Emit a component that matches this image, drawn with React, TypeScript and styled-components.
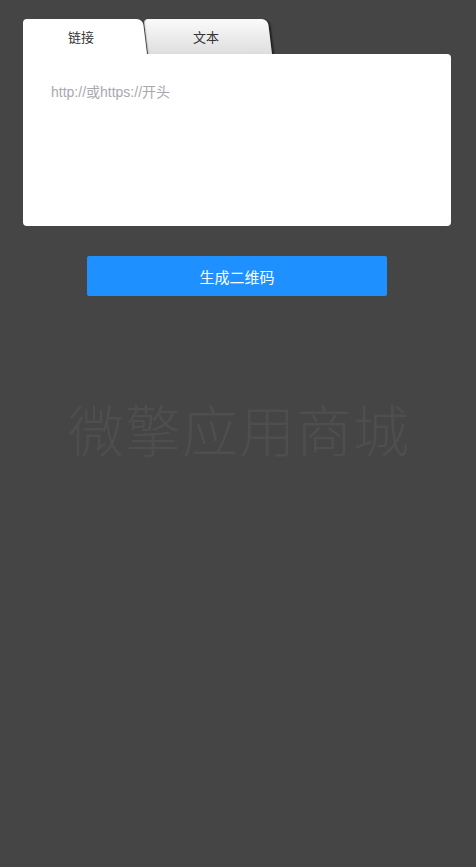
import { useState } from "react";
import styled, { createGlobalStyle } from "styled-components";

const GlobalStyle = createGlobalStyle`
  html, body {
    margin: 0;
    padding: 0;
    background: #454545;
    font-family: "Liberation Sans", Arial, "Noto Sans CJK SC", sans-serif;
  }
`;

const Page = styled.div`
  min-height: 867px;
  padding: 19px 25px 0 23px;
  box-sizing: border-box;
  display: flex;
  flex-direction: column;
`;

const TabBar = styled.div`
  display: flex;
  flex-direction: row;
  height: 35px;
`;

const Tab = styled.div<{ $active?: boolean }>`
  position: relative;
  width: 124px;
  height: 35px;
  padding-right: 8px;
  box-sizing: border-box;
  display: flex;
  align-items: center;
  justify-content: center;
  font-size: 13px;
  color: #333;
  cursor: pointer;
  z-index: ${(p) => (p.$active ? 2 : 1)};
  margin-right: ${(p) => (p.$active ? "1px" : "0")};

  &::before {
    content: "";
    position: absolute;
    top: 0;
    bottom: 0;
    right: 0;
    left: ${(p) => (p.$active ? "6px" : "0")};
    transform: skewX(7deg);
    transform-origin: bottom left;
    border-radius: 4px 6px 0 0;
    background: ${(p) =>
      p.$active ? "#fff" : "linear-gradient(to bottom, #fbfbfb, #dedede)"};
    box-shadow: ${(p) =>
      p.$active
        ? "none"
        : "2px 1px 2px rgba(0, 0, 0, 0.55), inset 1px 0 1px rgba(0,0,0,0.15)"};
    z-index: -1;
  }

  &::after {
    content: "";
    display: ${(p) => (p.$active ? "block" : "none")};
    position: absolute;
    left: 0;
    top: 0;
    bottom: 0;
    width: 40px;
    background: #fff;
    border-top-left-radius: 4px;
    z-index: -1;
  }
`;

const Card = styled.div`
  position: relative;
  z-index: 3;
  background: #fff;
  height: 172px;
  border-radius: 0 4px 4px 4px;
  box-sizing: border-box;
  padding: 30px 28px;
`;

const Input = styled.textarea`
  width: 100%;
  height: 100%;
  border: none;
  outline: none;
  resize: none;
  padding: 0;
  font-size: 14px;
  line-height: 17px;
  font-family: "Liberation Sans", Arial, "Noto Sans CJK SC", sans-serif;
  color: #333;
  background: transparent;

  &::placeholder {
    color: #a8a8ae;
  }
`;

const Button = styled.button`
  align-self: center;
  margin-top: 30px;
  width: 300px;
  height: 40px;
  border: none;
  border-radius: 2px;
  background: #1e90ff;
  color: #fff;
  font-size: 15px;
  font-family: "Liberation Sans", Arial, "Noto Sans CJK SC", sans-serif;
  cursor: pointer;
`;

const Watermark = styled.div`
  margin-top: 91px;
  padding-left: 4px;
  text-align: center;
  font-size: 56px;
  font-weight: 300;
  letter-spacing: 1px;
  color: #4e4e4e;
  font-family: "Noto Sans CJK SC", sans-serif;
  user-select: none;
`;

export default function App() {
  const [tab, setTab] = useState<"link" | "text">("link");
  return (
    <>
      <GlobalStyle />
      <Page>
        <TabBar>
          <Tab $active={tab === "link"} onClick={() => setTab("link")}>
            链接
          </Tab>
          <Tab $active={tab === "text"} onClick={() => setTab("text")}>
            文本
          </Tab>
        </TabBar>
        <Card>
          <Input
            placeholder={tab === "link" ? "http://或https://开头" : "请输入文本"}
          />
        </Card>
        <Button>生成二维码</Button>
        <Watermark>微擎应用商城</Watermark>
      </Page>
    </>
  );
}
